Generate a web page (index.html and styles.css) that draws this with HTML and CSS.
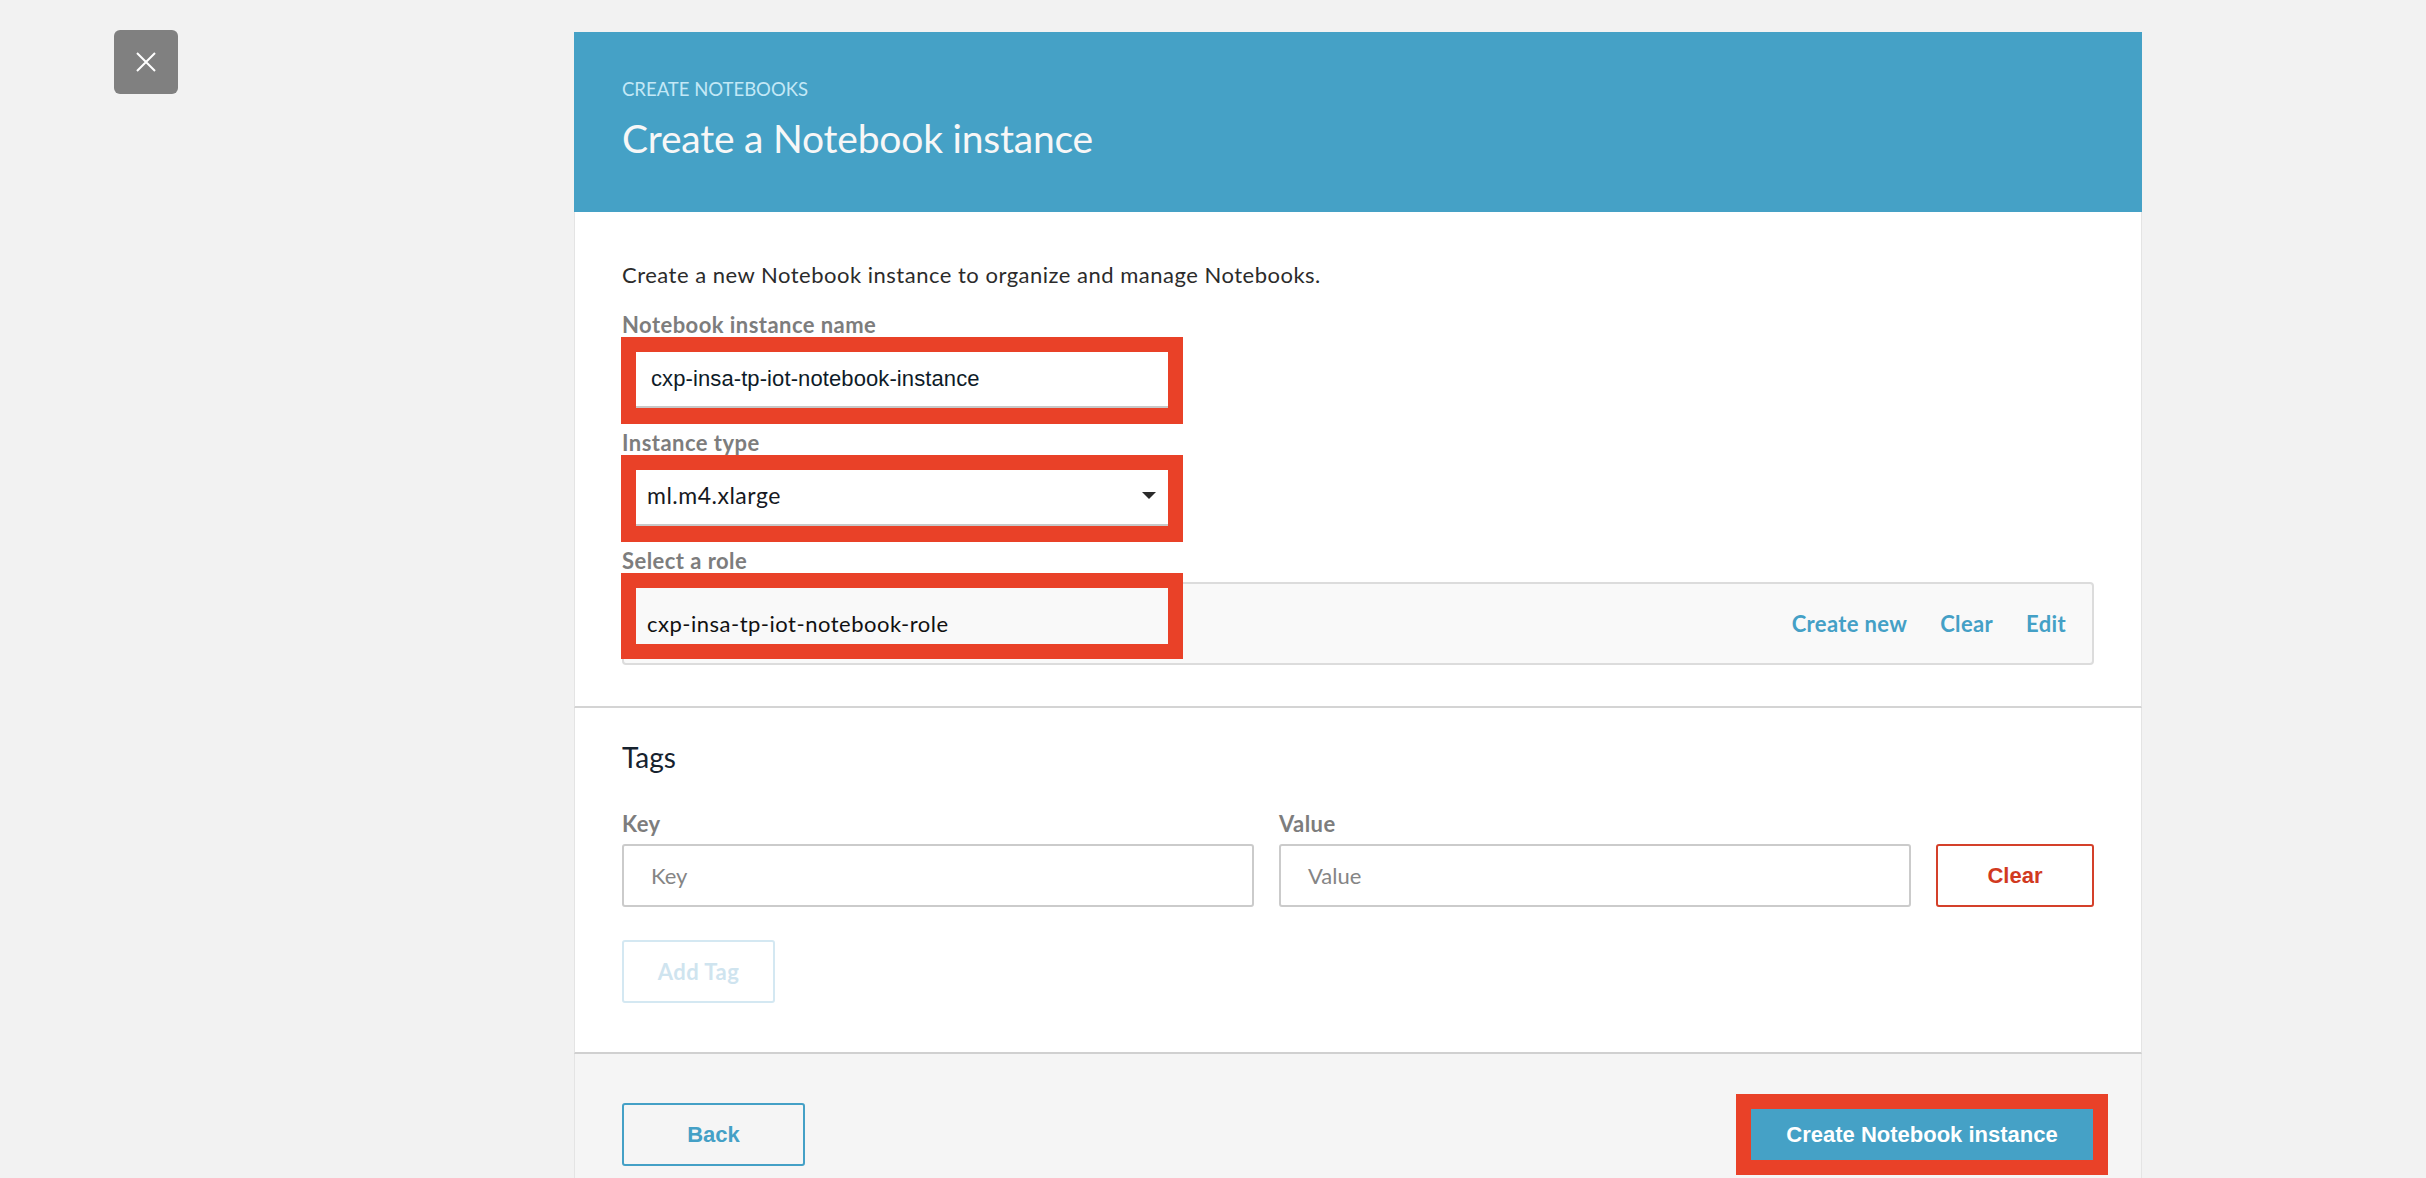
FILE: index.html
```html
<!DOCTYPE html>
<html lang="en">
<head>
<meta charset="utf-8">
<title>Create a Notebook instance</title>
<link rel="stylesheet" href="styles.css">
</head>
<body>
<div class="page">
  <button class="close" aria-label="Close">
    <svg width="20" height="20" viewBox="0 0 20 20"><path d="M1 1 L19 19 M19 1 L1 19" stroke="#fff" stroke-width="2" fill="none"/></svg>
  </button>
  <main class="card">
    <header class="card-head">
      <div class="eyebrow">CREATE NOTEBOOKS</div>
      <h1 class="title">Create a Notebook instance</h1>
    </header>
    <section class="sect sect-main">
      <p class="intro">Create a new Notebook instance to organize and manage Notebooks.</p>
      <label class="lbl lbl-first">Notebook instance name</label>
      <div class="mark"><div class="field field-text">cxp-insa-tp-iot-notebook-instance</div></div>
      <label class="lbl">Instance type</label>
      <div class="mark"><div class="field field-select"><span>ml.m4.xlarge</span><span class="caret"></span></div></div>
      <label class="lbl">Select a role</label>
      <div class="role">
        <span class="role-name">cxp-insa-tp-iot-notebook-role</span>
        <div class="role-links"><a>Create new</a><a>Clear</a><a>Edit</a></div>
        <span class="role-mark"></span>
      </div>
    </section>
    <section class="sect sect-tags">
      <h2 class="tags-title">Tags</h2>
      <div class="tag-grid">
        <label class="lbl lbl-grid">Key</label>
        <label class="lbl lbl-grid">Value</label>
        <span></span>
        <div class="input">Key</div>
        <div class="input">Value</div>
        <button class="btn btn-clear">Clear</button>
      </div>
      <button class="btn btn-add">Add Tag</button>
    </section>
    <footer class="card-foot">
      <button class="btn btn-back">Back</button>
      <span class="mark-btn"><button class="btn btn-primary">Create Notebook instance</button></span>
    </footer>
  </main>
</div>
</body>
</html>
```

FILE: styles.css
```css
* { box-sizing: border-box; }
html, body { margin: 0; padding: 0; }
body {
  background: #f2f2f2;
  font-family: Lato, "Open Sans", sans-serif;
  color: #333;
  overflow: hidden;
}
.page {
  display: flex;
  align-items: flex-start;
  padding-left: 114px;
}
.close {
  margin-top: 30px;
  width: 64px;
  height: 64px;
  border: none;
  border-radius: 6px;
  background: #808080;
  display: flex;
  align-items: center;
  justify-content: center;
  padding: 0;
}
.close svg { display: block; }
.card {
  margin-left: 396px;
  margin-top: 32px;
  width: 1568px;
  flex: none;
}
.card-head {
  height: 180px;
  background: #45a1c6;
  padding: 46px 48px 0;
}
.eyebrow {
  font-size: 18.5px;
  line-height: 23px;
  color: #c3e8f6;
}
.title {
  margin: 13px 0 0;
  font-size: 39px;
  line-height: 48px;
  font-weight: 400;
  letter-spacing: -0.2px;
  color: #f7f7f7;
}
.sect {
  background: #fff;
  border-left: 1px solid #e4e4e4;
  border-right: 1px solid #e4e4e4;
}
.sect-main {
  padding: 50px 47px 41px;
  border-bottom: 2px solid #d4d4d4;
}
.intro {
  margin: 0;
  font-size: 22px;
  line-height: 26px;
  letter-spacing: 0.5px;
  color: #2b2b2b;
}
.lbl {
  display: block;
  margin-top: 6px;
  font-size: 22px;
  line-height: 25px;
  font-weight: 700;
  letter-spacing: 0.45px;
  color: #7d7d7d;
}
.lbl-first { margin-top: 24px; }
.mark {
  width: 562px;
  margin-left: -1px;
  border: 15px solid #e94128;
  border-bottom-width: 16px;
}
.field {
  height: 56px;
  background: #fff;
  border-bottom: 2px solid #c8c8c8;
  display: flex;
  align-items: center;
}
.field-text {
  padding-left: 15px;
  font-family: "Liberation Sans", Arial, sans-serif;
  font-size: 22px;
  letter-spacing: 0.1px;
  color: #0e1b28;
}
.field-select {
  padding: 0 12px 4px 11px;
  justify-content: space-between;
  font-size: 23px;
  letter-spacing: 0.5px;
  color: #16191f;
}
.caret {
  width: 0;
  height: 0;
  border-left: 7px solid transparent;
  border-right: 7px solid transparent;
  border-top: 7px solid #2a2a2a;
}
.role {
  position: relative;
  margin-top: 9px;
  height: 83px;
  border: 2px solid #dcdcdc;
  border-radius: 4px;
  background: #f9f9f9;
  display: flex;
  align-items: center;
  justify-content: space-between;
  padding: 0 26px 0 23px;
}
.role-name {
  font-size: 22px;
  line-height: 26px;
  letter-spacing: 0.5px;
  color: #111;
}
.role-links {
  display: flex;
  gap: 33px;
}
.role-links a {
  font-size: 22px;
  line-height: 26px;
  font-weight: 700;
  letter-spacing: 0.35px;
  color: #44a0c6;
}
.role-mark {
  position: absolute;
  top: -11px;
  left: -3px;
  width: 562px;
  height: 86px;
  border: 15px solid #e94128;
}
.sect-tags {
  padding: 32px 47px 49px;
  border-bottom: 2px solid #d0d0d0;
}
.tags-title {
  margin: 0;
  font-size: 28px;
  line-height: 34px;
  font-weight: 400;
  color: #16222e;
}
.tag-grid {
  margin-top: 37px;
  display: grid;
  grid-template-columns: 1fr 1fr 158px;
  column-gap: 25px;
  row-gap: 8px;
}
.lbl-grid { margin-top: 0; }
.input {
  height: 63px;
  border: 2px solid #cbcbcb;
  border-radius: 3px;
  background: #fff;
  padding-left: 27px;
  display: flex;
  align-items: center;
  font-size: 22px;
  color: #858585;
}
.btn {
  font-family: "Liberation Sans", Arial, sans-serif;
  font-size: 22px;
  font-weight: 700;
  border-radius: 3px;
  padding: 0;
  display: flex;
  align-items: center;
  justify-content: center;
}
.btn-clear {
  height: 63px;
  border: 2px solid #d4402a;
  background: #fff;
  color: #d13a1f;
}
.btn-add {
  margin-top: 33px;
  width: 153px;
  height: 63px;
  border: 2px solid #d4e8f2;
  background: #fff;
  color: #cfe4ef;
  font-family: Lato, sans-serif;
  letter-spacing: 0.5px;
}
.card-foot {
  background: #f5f5f5;
  border-left: 1px solid #e4e4e4;
  border-right: 1px solid #e4e4e4;
  padding: 40px 47px 40px;
  display: flex;
  justify-content: space-between;
  align-items: center;
}
.btn-back {
  width: 183px;
  height: 63px;
  border: 2px solid #44a0c6;
  background: transparent;
  color: #44a0c6;
}
.mark-btn {
  display: inline-flex;
  border: 15px solid #e94128;
  margin-right: -14px;
}
.btn-primary {
  width: 342px;
  height: 51px;
  border: none;
  border-radius: 0;
  background: #45a1c6;
  color: #fff;
}
```
